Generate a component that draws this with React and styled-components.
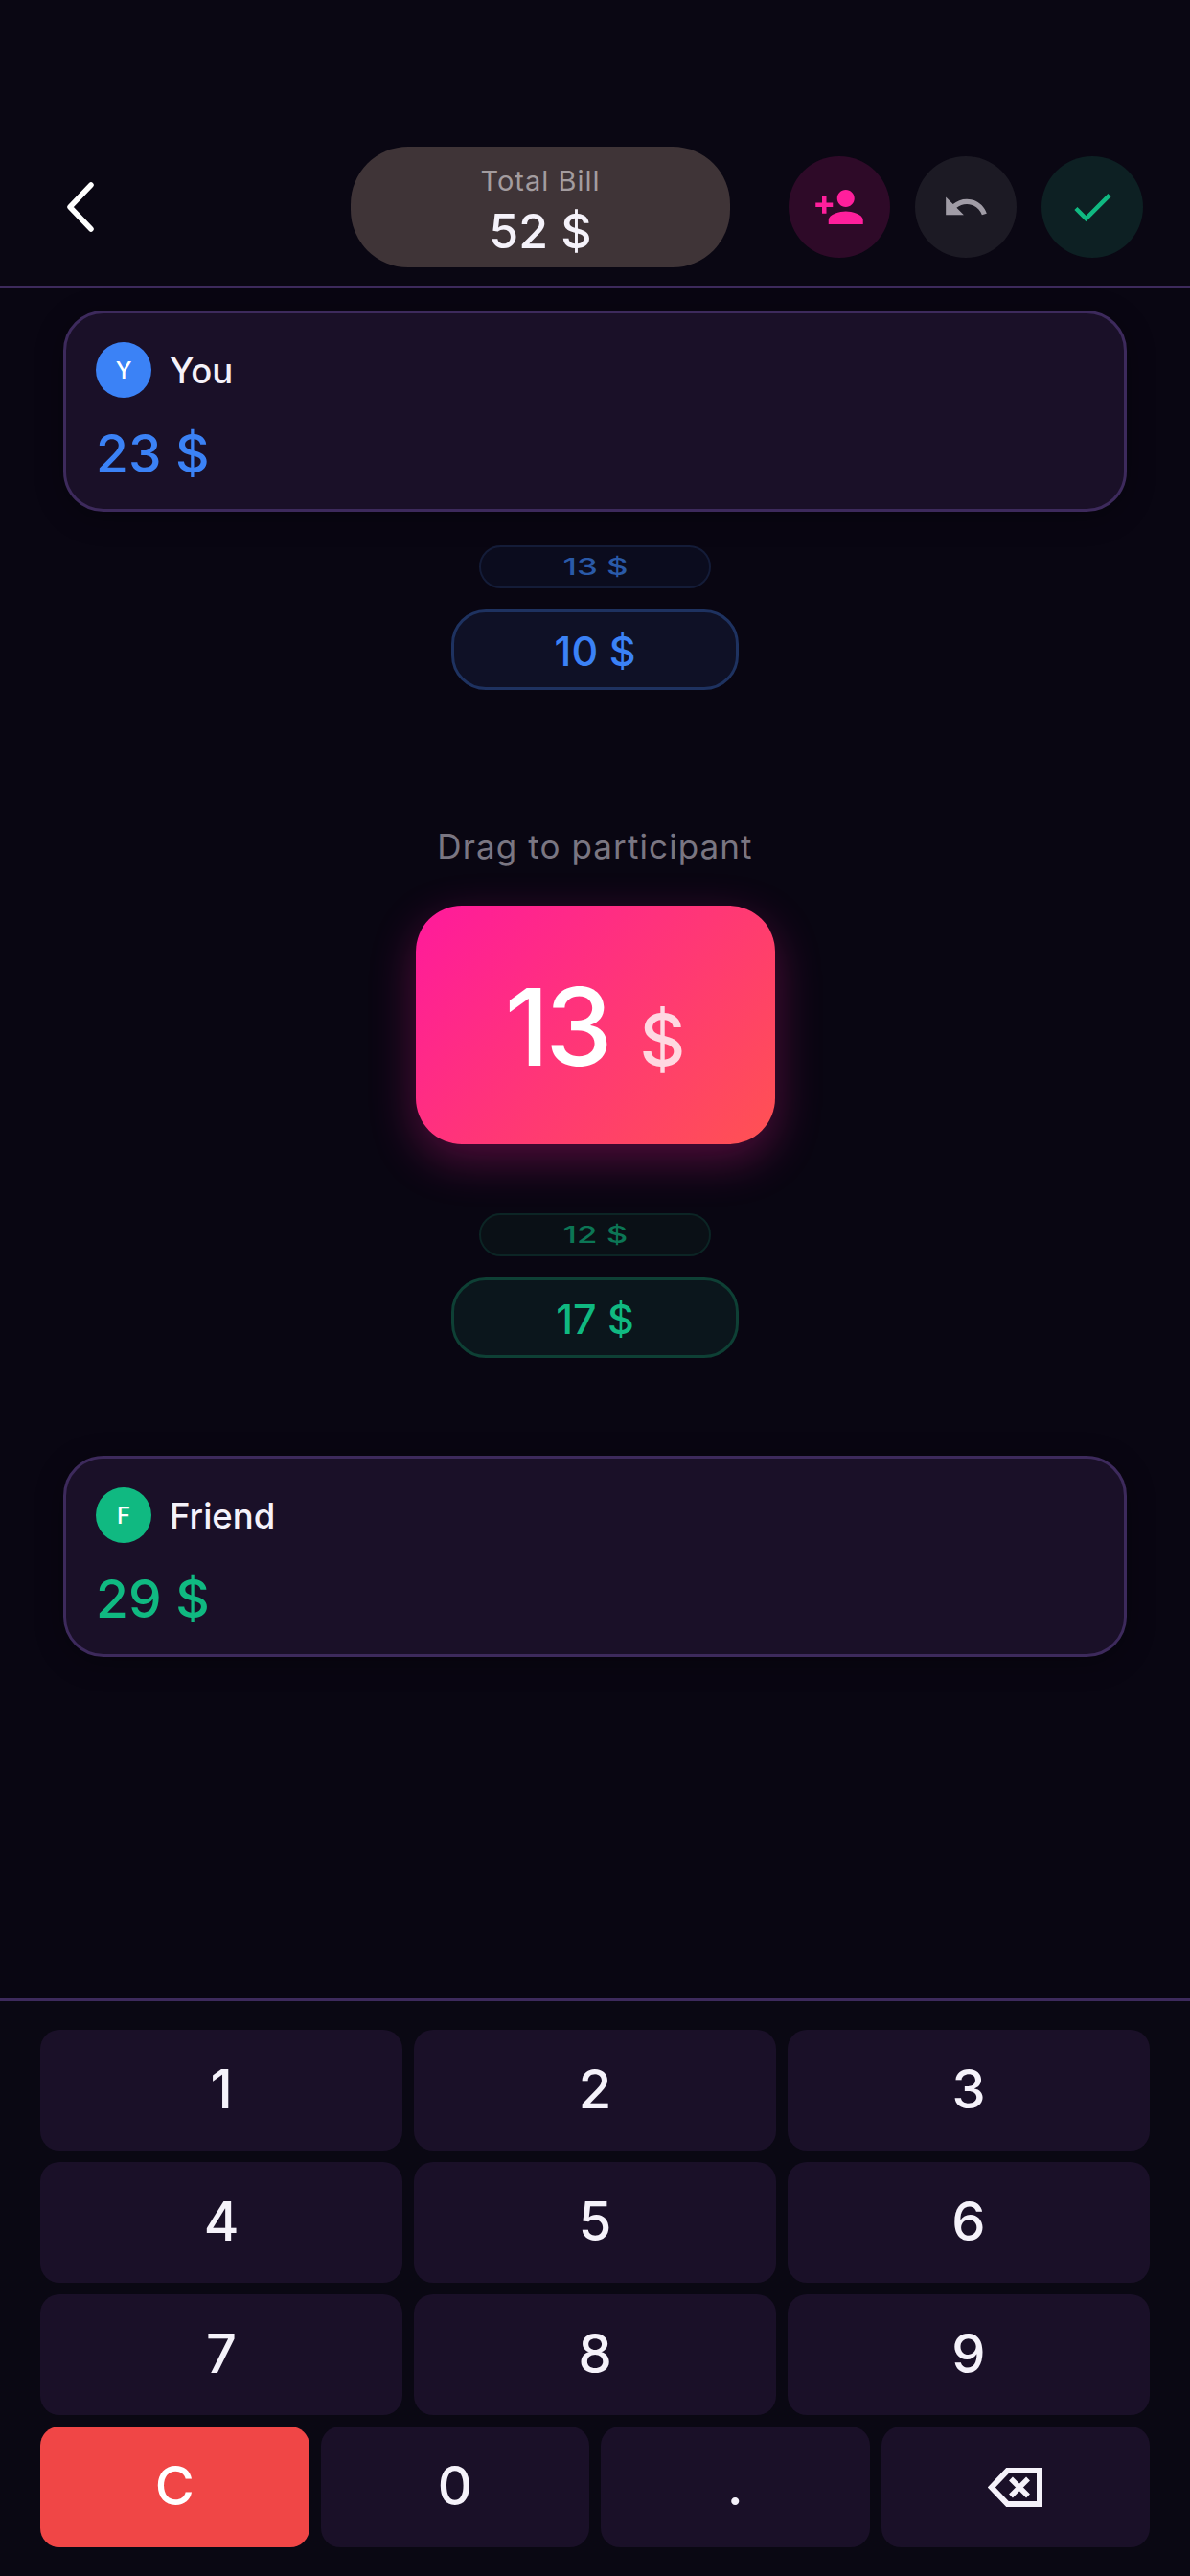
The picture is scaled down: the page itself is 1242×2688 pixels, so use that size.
import styled, { createGlobalStyle } from "styled-components";
import { MdPersonAdd, MdUndo, MdCheck } from "react-icons/md";

const BLUE = "#3b82f6";
const GREEN = "#10b981";

const GlobalStyle = createGlobalStyle`
  html, body {
    margin: 0;
    padding: 0;
    background: #090612;
  }
`;

const Page = styled.div`
  width: 1242px;
  height: 2688px;
  display: flex;
  flex-direction: column;
  background: #090612;
  font-family: Inter, "Liberation Sans", sans-serif;
  color: #f5f2fa;
  overflow: hidden;
`;

const Header = styled.header`
  height: 300px;
  box-sizing: border-box;
  display: flex;
  align-items: center;
  padding: 133px 49px 0 70px;
  background: #0a0713;
  border-bottom: 2px solid #3d2a5c;
`;

const BackButton = styled.svg`
  width: 28px;
  height: 52px;
  fill: none;
  stroke: #ffffff;
  stroke-width: 5.5;
  stroke-linecap: round;
  stroke-linejoin: round;
`;

const TotalPill = styled.div`
  width: 396px;
  height: 126px;
  box-sizing: border-box;
  padding-top: 12px;
  margin-left: auto;
  margin-right: 61px;
  display: flex;
  flex-direction: column;
  align-items: center;
  justify-content: center;
  border-radius: 60px;
  background: #3f3437;
`;

const TotalLabel = styled.div`
  font-size: 29px;
  line-height: 36px;
  letter-spacing: 1px;
  color: #a39c9f;
`;

const TotalValue = styled.div`
  font-size: 50px;
  line-height: 62px;
  font-weight: 500;
  margin-top: 3px;
`;

const Actions = styled.div`
  display: flex;
  gap: 26px;
`;

const ActionButton = styled.div`
  width: 106px;
  height: 106px;
  border-radius: 50%;
  display: flex;
  align-items: center;
  justify-content: center;
  background: ${({ $bg }) => $bg};
  color: ${({ $color }) => $color};
`;

const Main = styled.main`
  display: flex;
  flex-direction: column;
  align-items: center;
  padding-top: 24px;
`;

const ParticipantCard = styled.section`
  width: 1110px;
  height: 210px;
  box-sizing: border-box;
  margin-top: ${({ $top }) => $top || 0}px;
  padding: 30px 31px;
  border: 3px solid #3d2a5c;
  border-radius: 42px;
  background: #1a1028;
  box-shadow: 0 6px 30px rgba(0, 0, 0, 0.3);
`;

const NameRow = styled.div`
  display: flex;
  align-items: center;
  gap: 19px;
`;

const Avatar = styled.div`
  width: 58px;
  height: 58px;
  border-radius: 50%;
  display: flex;
  align-items: center;
  justify-content: center;
  font-size: 24px;
  font-weight: 500;
  color: #ffffff;
  background: ${({ $color }) => $color};
`;

const Name = styled.div`
  padding-top: 2px;
  font-size: 36.5px;
  font-weight: 500;
`;

const CardAmount = styled.div`
  margin-top: 26px;
  font-size: 55px;
  line-height: 64px;
  font-weight: 500;
  color: ${({ $color }) => $color};
`;

const PreviewPill = styled.div`
  width: 242px;
  height: 45px;
  box-sizing: border-box;
  margin-top: ${({ $top }) => $top}px;
  display: flex;
  align-items: center;
  justify-content: center;
  border: 2px solid ${({ $border }) => $border};
  border-radius: 23px;
  background: ${({ $bg }) => $bg};
  color: ${({ $color }) => $color};
`;

const PreviewText = styled.span`
  font-size: 24px;
  font-weight: 500;
  transform: scaleX(1.45);
`;

const SharePill = styled.div`
  width: 300px;
  height: 84px;
  box-sizing: border-box;
  margin-top: 22px;
  padding-top: 2px;
  display: flex;
  align-items: center;
  justify-content: center;
  border: 3px solid ${({ $border }) => $border};
  border-radius: 36px;
  background: ${({ $bg }) => $bg};
  color: ${({ $color }) => $color};
  font-size: 43px;
  font-weight: 500;
`;

const DragHint = styled.div`
  margin-top: 142px;
  font-size: 35px;
  line-height: 42px;
  letter-spacing: 1.1px;
  color: #7a7682;
`;

const AmountChip = styled.div`
  width: 375px;
  height: 249px;
  box-sizing: border-box;
  margin-top: 41px;
  padding-top: 3px;
  display: flex;
  align-items: baseline;
  justify-content: center;
  gap: 32px;
  line-height: 246px;
  border-radius: 48px;
  background: linear-gradient(135deg, #ff1a9c 0%, #ff5252 100%);
  box-shadow: 0 16px 48px rgba(255, 26, 156, 0.3);
  color: #ffffff;
`;

const ChipValue = styled.span`
  font-size: 112px;
  font-weight: 500;
  letter-spacing: -4px;
`;

const ChipCurrency = styled.span`
  font-size: 74px;
  font-weight: 500;
  opacity: 0.8;
`;

const Keypad = styled.div`
  margin-top: auto;
  padding: 30px 42px;
  display: flex;
  flex-direction: column;
  gap: 12px;
  background: #0a0813;
  border-top: 3px solid #3d2a5c;
`;

const KeyRow = styled.div`
  display: grid;
  grid-template-columns: repeat(${({ $cols }) => $cols}, 1fr);
  gap: 12px;
`;

const Key = styled.div`
  height: 126px;
  box-sizing: border-box;
  padding-bottom: ${({ $icon }) => ($icon ? 0 : 3)}px;
  display: flex;
  align-items: center;
  justify-content: center;
  border-radius: 20px;
  background: ${({ $danger }) => ($danger ? "#f04646" : "#1a1028")};
  color: ${({ $danger }) => ($danger ? "#ffffff" : "#f5f2fa")};
  font-size: 56px;
  font-weight: 500;
`;

const BackspaceIcon = styled.svg`
  width: 57px;
  height: 41px;
  fill: none;
  stroke: #f5f2fa;
  stroke-width: 6;
`;

const Participant = ({ initial, name, amount, color, top }) => (
  <ParticipantCard $top={top}>
    <NameRow>
      <Avatar $color={color}>{initial}</Avatar>
      <Name>{name}</Name>
    </NameRow>
    <CardAmount $color={color}>{amount} $</CardAmount>
  </ParticipantCard>
);

const blueTones = {
  preview: { $bg: "#0b0c1e", $border: "#141c38", $color: "#2a5aa8" },
  share: { $bg: "#0f1126", $border: "#1e3260", $color: BLUE },
};

const greenTones = {
  preview: { $bg: "#0a1016", $border: "#0c2525", $color: "#0c7655" },
  share: { $bg: "#0b161c", $border: "#0e4035", $color: GREEN },
};

const App = () => {
  return (
    <Page>
      <GlobalStyle />
      <Header>
        <BackButton viewBox="0 0 28 52">
          <polyline points="25,3 3,26 25,49" />
        </BackButton>
        <TotalPill>
          <TotalLabel>Total Bill</TotalLabel>
          <TotalValue>52 $</TotalValue>
        </TotalPill>
        <Actions>
          <ActionButton $bg="#2e0a28" $color="#ff1f9c">
            <MdPersonAdd size={54} />
          </ActionButton>
          <ActionButton $bg="#1c1a24" $color="#a09ca6">
            <MdUndo size={50} />
          </ActionButton>
          <ActionButton $bg="#0d2023" $color={GREEN}>
            <MdCheck size={52} />
          </ActionButton>
        </Actions>
      </Header>

      <Main>
        <Participant initial="Y" name="You" amount={23} color={BLUE} />
        <PreviewPill $top={35} {...blueTones.preview}>
          <PreviewText>13 $</PreviewText>
        </PreviewPill>
        <SharePill {...blueTones.share}>10 $</SharePill>

        <DragHint>Drag to participant</DragHint>
        <AmountChip>
          <ChipValue>13</ChipValue>
          <ChipCurrency>$</ChipCurrency>
        </AmountChip>

        <PreviewPill $top={72} {...greenTones.preview}>
          <PreviewText>12 $</PreviewText>
        </PreviewPill>
        <SharePill {...greenTones.share}>17 $</SharePill>

        <Participant initial="F" name="Friend" amount={29} color={GREEN} top={102} />
      </Main>

      <Keypad>
        {[["1", "2", "3"], ["4", "5", "6"], ["7", "8", "9"]].map((row) => (
          <KeyRow $cols={3} key={row[0]}>
            {row.map((k) => <Key key={k}>{k}</Key>)}
          </KeyRow>
        ))}
        <KeyRow $cols={4}>
          <Key $danger>C</Key>
          <Key>0</Key>
          <Key>.</Key>
          <Key $icon>
            <BackspaceIcon viewBox="0 0 57 41">
              <path d="M54 3H20.5L3.8 20.5 20.5 38H54z" />
              <path d="M24 11.5 42 29.5M42 11.5 24 29.5" strokeWidth="5.5" />
            </BackspaceIcon>
          </Key>
        </KeyRow>
      </Keypad>
    </Page>
  );
};

export default App;
